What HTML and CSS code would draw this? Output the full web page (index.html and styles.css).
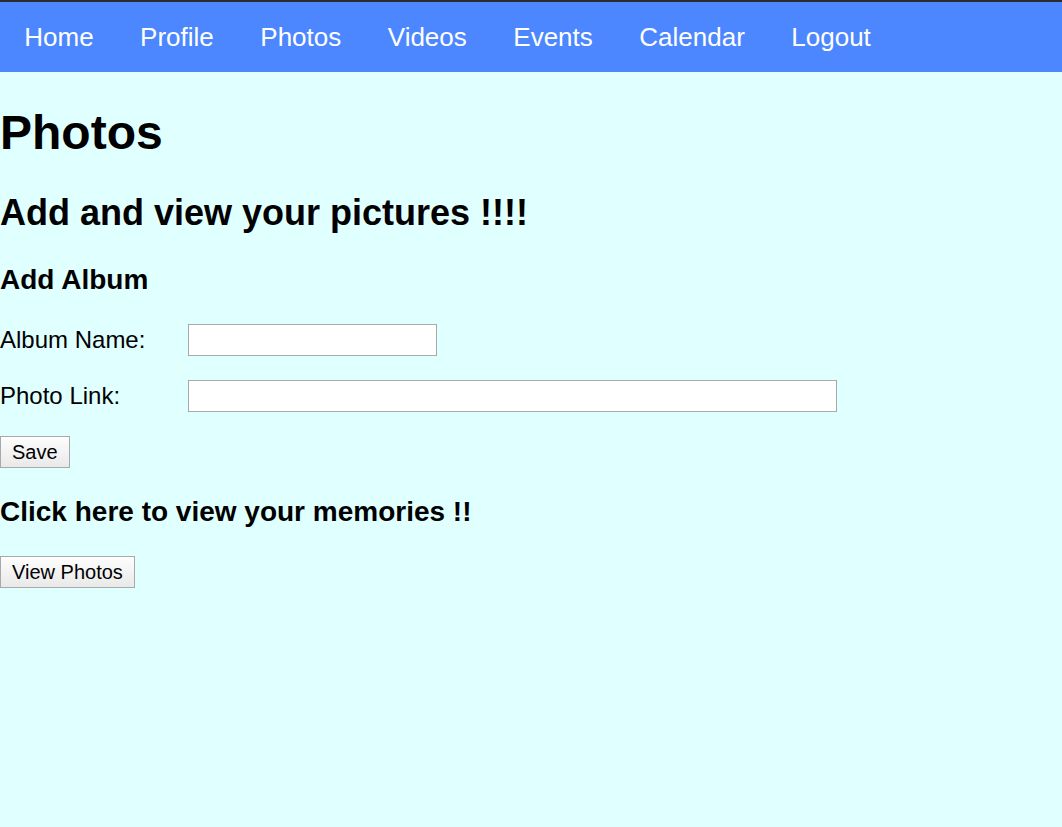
FILE: index.html
```html
<!DOCTYPE html>
<html lang="en">
<head>
<meta charset="utf-8">
<title>Photos</title>
<link rel="stylesheet" href="styles.css">
</head>
<body>
<nav class="topnav">
  <a href="#">Home</a>
  <a href="#">Profile</a>
  <a href="#">Photos</a>
  <a href="#">Videos</a>
  <a href="#">Events</a>
  <a href="#">Calendar</a>
  <a href="#">Logout</a>
</nav>
<main class="content">
  <h1>Photos</h1>
  <h2>Add and view your pictures !!!!</h2>
  <h3>Add Album</h3>
  <form class="album-form">
    <label class="field-label" for="album">Album Name:</label>
    <input class="field short" id="album" type="text">
    <label class="field-label" for="link">Photo Link:</label>
    <input class="field long" id="link" type="text">
    <div class="form-actions"><button class="btn" type="button">Save</button></div>
  </form>
  <h3>Click here to view your memories !!</h3>
  <button class="btn" type="button">View Photos</button>
</main>
</body>
</html>
```

FILE: styles.css
```css
html, body {
  margin: 0;
  padding: 0;
}
body {
  background: #e0ffff;
  font-family: "Liberation Sans", Arial, sans-serif;
  font-size: 24px;
  color: #000;
}
.topnav {
  display: flex;
  align-items: center;
  height: 70px;
  padding-left: 1px;
  border-top: 2px solid #2b2b2b;
  background: #4d87ff;
}
.topnav a {
  padding: 0 23.25px;
  font-size: 26px;
  color: #fff;
  text-decoration: none;
}
.content h1 {
  font-size: 48px;
  margin: 33px 0 32px;
}
.content h2 {
  font-size: 36px;
  margin: 30px 0;
}
.content h3 {
  font-size: 28px;
  margin: 28px 0;
}
.album-form {
  display: grid;
  grid-template-columns: 188px auto;
  grid-auto-rows: 32px;
  row-gap: 24px;
  align-items: center;
  justify-items: start;
}
.field-label {
  font-size: 24px;
}
.field {
  box-sizing: border-box;
  height: 32px;
  border: 1px solid #a9a9a9;
  background: #fff;
  margin: 0;
  padding: 0 4px;
  font: inherit;
  font-size: 20px;
}
.field.short { width: 249px; }
.field.long { width: 649px; }
.form-actions {
  grid-column: 1 / -1;
}
.btn {
  box-sizing: border-box;
  height: 32px;
  margin: 0;
  padding: 0 11px;
  font-family: "Liberation Sans", Arial, sans-serif;
  font-size: 20px;
  color: #000;
  border: 1px solid #a9a9a9;
  border-radius: 0;
  background: linear-gradient(#fdfdfd, #e9e9e9);
}
```
